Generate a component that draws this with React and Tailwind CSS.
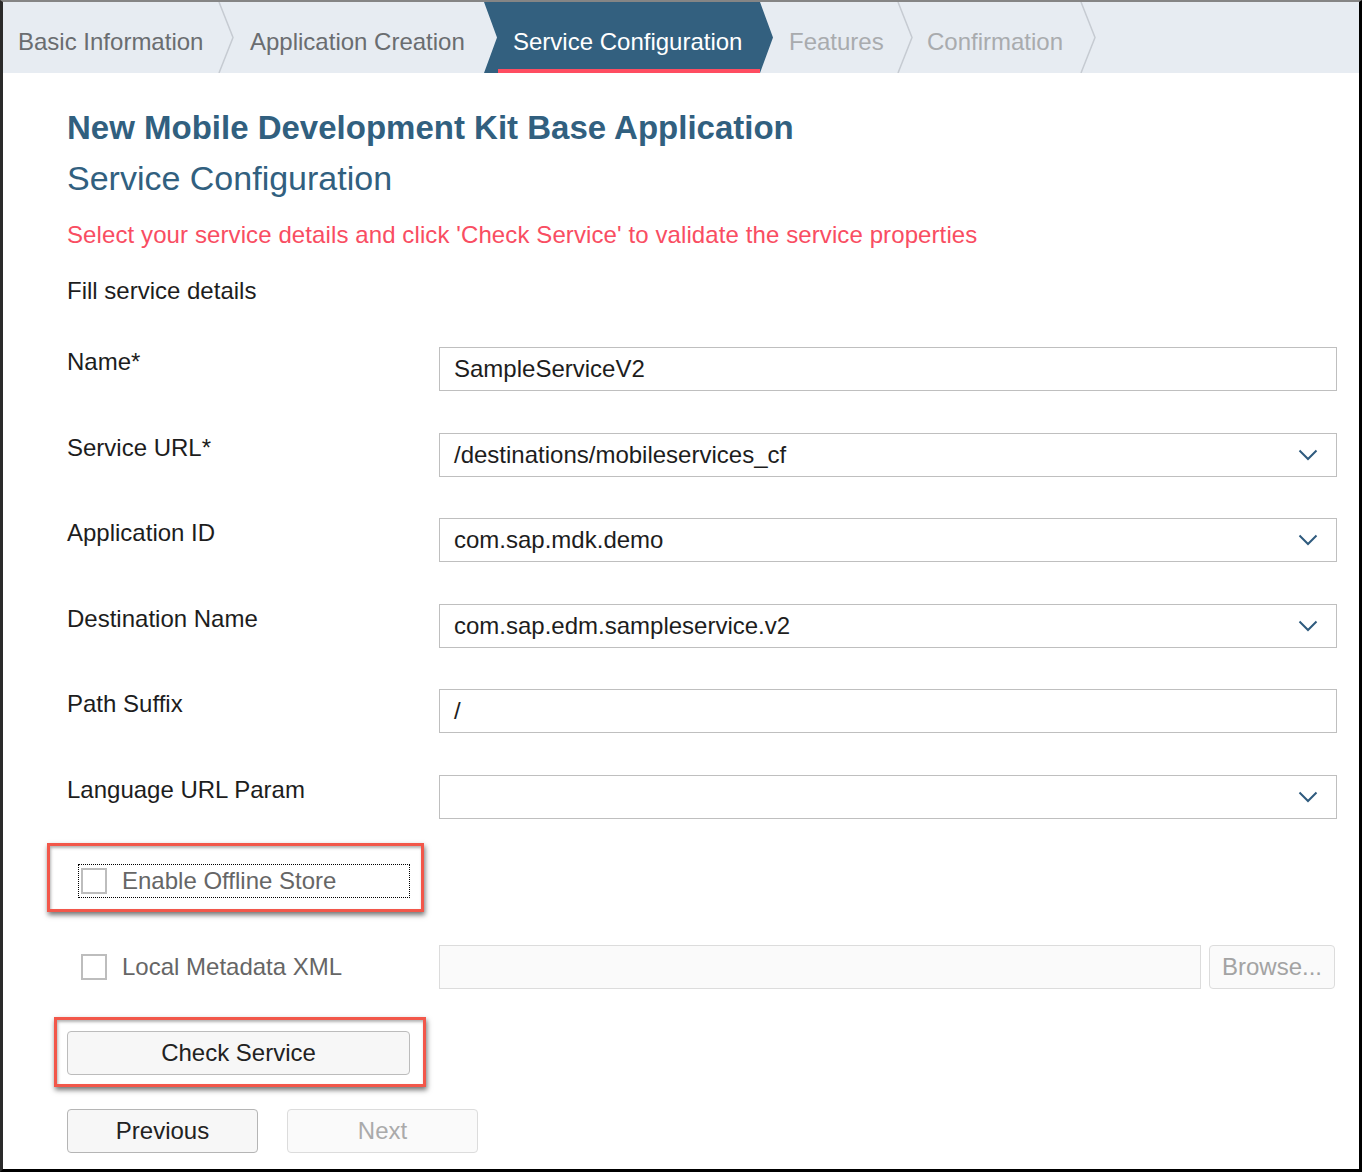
import React from 'react';

const FONT = { fontFamily: '"Liberation Sans", Arial, sans-serif' };

function Chevron() {
  return (
    <svg width="16" height="71" viewBox="0 0 16 71" className="shrink-0">
      <polyline points="1,0 15,35.5 1,71" fill="none" stroke="#c6cbd2" strokeWidth="1.5" />
    </svg>
  );
}

function DropArrow() {
  return (
    <svg width="20" height="12" viewBox="0 0 20 12" className="shrink-0">
      <path d="M1.5 1.5 L10 10 L18.5 1.5" fill="none" stroke="#2f5b7e" strokeWidth="2" />
    </svg>
  );
}

function TabBar() {
  return (
    <div className="flex h-[71px] bg-[#e7ecf2] text-[24px]">
      <div className="flex w-[215px] shrink-0 items-center pl-[15px] pt-[8px] text-[#6a6d70]">
        Basic Information
      </div>
      <Chevron />
      <div className="flex w-[250px] shrink-0 items-center pl-[16px] pt-[8px] text-[#6a6d70]">
        Application Creation
      </div>
      <div className="flex w-[289px] shrink-0 flex-col bg-[#33607f] text-white [clip-path:polygon(0_0,calc(100%_-_13px)_0,100%_50%,calc(100%_-_13px)_100%,0_100%,13px_50%)]">
        <div className="flex flex-1 items-center pl-[29px] pt-[12px]">Service Configuration</div>
        <div className="ml-[14px] mr-[13px] h-[4px] bg-[#ff4d61]" />
      </div>
      <div className="flex w-[124px] shrink-0 items-center pl-[16px] pt-[8px] text-[#a9abae]">
        Features
      </div>
      <Chevron />
      <div className="flex w-[167px] shrink-0 items-center pl-[14px] pt-[8px] text-[#a9abae]">
        Confirmation
      </div>
      <Chevron />
    </div>
  );
}

function Field({ label, value, select }) {
  return (
    <div className="flex">
      <div className="w-[372px] shrink-0 leading-[30px] text-[#1d1d1d]">{label}</div>
      <div className="flex h-[44px] w-[898px] items-center justify-between border border-[#bfbfbf] bg-white pl-[14px] pr-[18px] text-[#1d1d1d]">
        <span className="leading-[30px]">{value}</span>
        {select && <DropArrow />}
      </div>
    </div>
  );
}

function Checkbox() {
  return <div className="h-[26px] w-[26px] shrink-0 border-2 border-[#bdbdbd] bg-white" />;
}

export default function App() {
  const fields = [
    { label: 'Name*', value: 'SampleServiceV2' },
    { label: 'Service URL*', value: '/destinations/mobileservices_cf', select: true },
    { label: 'Application ID', value: 'com.sap.mdk.demo', select: true },
    { label: 'Destination Name', value: 'com.sap.edm.sampleservice.v2', select: true },
    { label: 'Path Suffix', value: '/' },
    { label: 'Language URL Param', value: '', select: true },
  ];

  return (
    <div
      style={FONT}
      className="h-[1172px] w-[1362px] overflow-hidden border-t-2 border-l-[3px] border-r-[3px] border-b-[3px] border-t-[#858585] border-l-[#2a2a2a] border-r-black border-b-black bg-white"
    >
      <TabBar />

      <div className="pl-[64px] text-[24px]">
        {/* Headings */}
        <h1 className="mt-[35px] text-[33px] font-bold leading-[40px] text-[#31607f]">
          New Mobile Development Kit Base Application
        </h1>
        <h2 className="mt-[10px] text-[34px] leading-[40px] text-[#31607f]">Service Configuration</h2>
        <p className="mt-[22px] leading-[30px] tracking-[0.1px] text-[#f94d62]">
          Select your service details and click 'Check Service' to validate the service properties
        </p>
        <p className="mt-[26px] leading-[30px] text-[#1d1d1d]">Fill service details</p>

        {/* Form fields */}
        <div className="mt-[41px] flex flex-col gap-[41.5px]">
          {fields.map((f) => (
            <Field key={f.label} {...f} />
          ))}
        </div>

        {/* Enable Offline Store (highlighted) */}
        <div className="ml-[-20px] mt-[24px] h-[69px] w-[377px] border-[3px] border-[#f2574a] pl-[28px] pt-[18px] shadow-[inset_1px_2px_3px_rgba(0,0,0,0.3),1px_3px_5px_rgba(0,0,0,0.55)]">
          <div className="flex h-[34px] w-[332px] items-center gap-[15px] border border-dotted border-black pl-[2px]">
            <Checkbox />
            <span className="leading-[30px] text-[#666]">Enable Offline Store</span>
          </div>
        </div>

        {/* Local Metadata XML */}
        <div className="mt-[33px] flex items-center">
          <div className="flex w-[372px] shrink-0 items-center gap-[15px] pl-[14px]">
            <Checkbox />
            <span className="leading-[30px] text-[#666]">Local Metadata XML</span>
          </div>
          <div className="h-[44px] w-[762px] border border-[#dcdcdc] bg-[#fafafa]" />
          <button className="ml-[8px] h-[44px] w-[126px] rounded-[4px] border border-[#dcdcdc] bg-[#fafafa] text-[#a3a3a3]">
            Browse...
          </button>
        </div>

        {/* Check Service (highlighted) */}
        <div className="ml-[-13px] mt-[28px] h-[70px] w-[372px] border-[3px] border-[#f2574a] pl-[10px] pt-[11px] shadow-[inset_1px_2px_3px_rgba(0,0,0,0.3),1px_3px_5px_rgba(0,0,0,0.55)]">
          <button className="h-[44px] w-[343px] rounded-[4px] border border-[#bcbcbc] bg-[#f7f7f7] text-[#222]">
            Check Service
          </button>
        </div>

        {/* Navigation */}
        <div className="mt-[22px] flex gap-[29px]">
          <button className="h-[44px] w-[191px] rounded-[4px] border border-[#b5b5b5] bg-[#f7f7f7] text-[#222]">
            Previous
          </button>
          <button className="h-[44px] w-[191px] rounded-[4px] border border-[#dcdcdc] bg-[#fafafa] text-[#aaa]">
            Next
          </button>
        </div>
      </div>
    </div>
  );
}
